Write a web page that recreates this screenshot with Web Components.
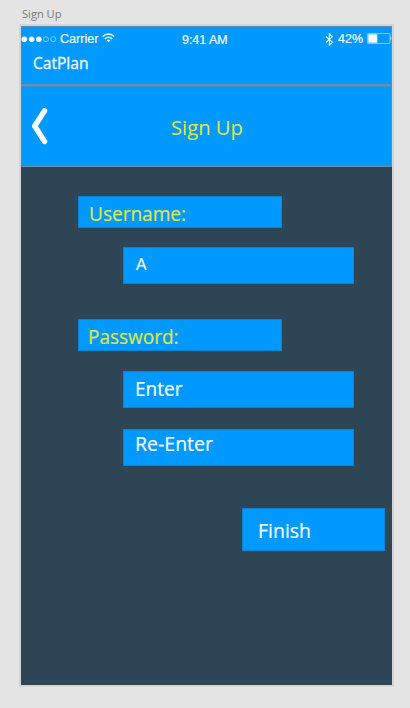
<!DOCTYPE html>
<html lang="en"><head><meta charset="utf-8"><title>Sign Up</title>
<style>
html,body{margin:0;height:100%}
body{background:#e4e4e4;overflow:hidden}
</style></head><body>
<sign-up-page></sign-up-page>
<script>
const define=(name,html,setup)=>customElements.define(name,class extends HTMLElement{
  connectedCallback(){
    if(this.shadowRoot)return;
    const t=document.createElement('template');t.innerHTML=html;
    this.attachShadow({mode:'open'}).append(t.content.cloneNode(true));
    if(setup)setup(this);
  }
});

// One line of text whose advance width is fitted to the "width" attribute.
define('fit-text',`<style>
:host{display:block;white-space:nowrap;line-height:1.36}
span{display:inline-block;transform-origin:0 50%}
</style><span><slot></slot></span>`,el=>{
  const s=el.shadowRoot.querySelector('span'),w=+el.getAttribute('width');
  el.style.fontSize=el.getAttribute('size')+'px';
  s.style.transform='scaleX('+w/s.getBoundingClientRect().width+')';
  el.style.width=w+'px';
});

define('status-bar',`<style>
:host{display:flex;height:25px;padding-top:1px;box-sizing:border-box;align-items:center;color:#f4faff;font-family:"Liberation Sans",Arial,sans-serif}
svg{display:block;flex:none}
.sp{flex:1}
</style>
<svg width="36" height="10" viewBox="0 0 36 10"><g fill="#fff"><circle cx="3.3" cy="4.2" r="2.8"/><circle cx="10.6" cy="4.2" r="2.8"/><circle cx="17.8" cy="4.2" r="2.8"/></g><g fill="none" stroke="#8dceff" stroke-width=".9"><circle cx="25" cy="4.2" r="2.5"/><circle cx="32.2" cy="4.2" r="2.5"/></g></svg>
<fit-text size="12" width="38.5" style="margin:-1px 0 0 2.5px;-webkit-text-stroke:.2px">Carrier</fit-text>
<svg width="13" height="10" viewBox="0 0 13 10" style="margin:-4px 0 0 3.5px" fill="none" stroke="#fff" stroke-width="1.5"><path d="M.8 3.5Q6.5-1.5 12.2 3.5M2.8 5.9Q6.5 2.7 10.2 5.9"/><path d="M4.6 7.3Q6.5 5.8 8.4 7.3L6.5 9.3Z" fill="#fff" stroke="none"/></svg>
<fit-text size="12" width="45.5" style="margin:1px 0 0 67.5px;-webkit-text-stroke:.2px">9:41 AM</fit-text>
<div class="sp"></div>
<svg width="9" height="13" viewBox="0 0 9 13" style="margin-top:-2px" fill="none" stroke="#edf7ff" stroke-width="1.1"><path d="M1 3.5 7.4 9.2 4.4 12V1L7.4 3.8 1 9.5"/></svg>
<fit-text size="12" width="25" style="margin:-1px 4px 0 4px;-webkit-text-stroke:.2px">42%</fit-text>
<svg width="25" height="12" viewBox="0 0 25 12" style="margin:-2px -1px 0 0"><rect x=".5" y=".5" width="22.5" height="10" rx=".6" fill="none" stroke="#80c8ff"/><path d="M1.3 1.3h9v8.4h-9z" fill="#fff"/><path d="M23.4 3.8q1.8 1.6 0 3.2z" fill="#fff"/></svg>
`);

define('app-bar',`<style>
:host{display:flex;flex-direction:column;height:60px;box-sizing:border-box;background:#09f;border:1px solid #5c8eb5;border-width:1px 1px 2px 0;border-bottom-color:#7190a5;color:#f6fbff}
fit-text{margin:0 0 0 12px;-webkit-text-stroke:.3px}
</style><status-bar></status-bar><fit-text size="16.5" width="55.5"><slot></slot></fit-text>`);

define('title-bar',`<style>
:host{display:grid;grid-template-columns:1fr auto 1fr;align-items:center;height:81px;box-sizing:border-box;background:#09f;border:1px solid #5c8eb5;border-bottom-color:#7190a5;border-left:0;border-top-color:#3b94d2;color:#e2e83b}
svg{display:block;margin:-1px 0 0 10px}
</style><svg width="18" height="38" viewBox="0 0 18 38"><path d="M13.6 3.8 3.7 19 13.6 34.5" fill="none" stroke="#fff" stroke-width="5.4" stroke-linecap="round" stroke-linejoin="round"/></svg>
<fit-text size="20.5" width="72" style="margin:2px 0 0 1px"><slot></slot></fit-text><span></span>`);

define('blue-box',`<style>
:host{display:flex;align-items:flex-start;box-sizing:border-box;background:#09f;border:1px solid #0c84d5;color:#f8fcff;-webkit-text-stroke:.2px}
:host([kind=label]){width:204px;height:32px;margin-left:57px;color:#e2e838}
:host([kind=field]){width:231px;height:37px;margin-left:102px}
:host([kind=button]){width:143px;height:43px;margin-left:221px}
</style><slot></slot>`);

define('phone-frame',`<style>
:host{display:block;width:371px;height:659px;background:#2e4555;box-shadow:0 0 0 2px #d5d5d5;font-family:"Open Sans","Noto Sans",sans-serif}
</style><slot></slot>`);

define('sign-up-page',`<style>
:host{display:block;padding:6px 0 0 21px;font-family:"Open Sans","Noto Sans",sans-serif}
.caption{height:20px;color:#777}
</style>
<div class="caption"><fit-text size="11.5" width="39.5" style="margin-left:1px">Sign Up</fit-text></div>
<phone-frame>
<app-bar>CatPlan</app-bar>
<title-bar>Sign Up</title-bar>
<blue-box kind="label" style="margin-top:29px"><fit-text size="20.5" width="97" style="margin:3px 0 0 9.5px">Username:</fit-text></blue-box>
<blue-box kind="field" style="margin-top:19px"><fit-text size="15.5" width="10.5" style="margin:6px 0 0 12px">A</fit-text></blue-box>
<blue-box kind="label" style="margin-top:35px"><fit-text size="20.5" width="90.5" style="margin:3px 0 0 9px">Password:</fit-text></blue-box>
<blue-box kind="field" style="margin-top:20px"><fit-text size="20.5" width="47.5" style="margin:3px 0 0 11px">Enter</fit-text></blue-box>
<blue-box kind="field" style="margin-top:21px"><fit-text size="20.5" width="78" style="margin:0 0 0 11px">Re-Enter</fit-text></blue-box>
<blue-box kind="button" style="margin-top:42px"><fit-text size="20.5" width="53" style="margin:8px 0 0 14.5px">Finish</fit-text></blue-box>
</phone-frame>`);
</script></body></html>
